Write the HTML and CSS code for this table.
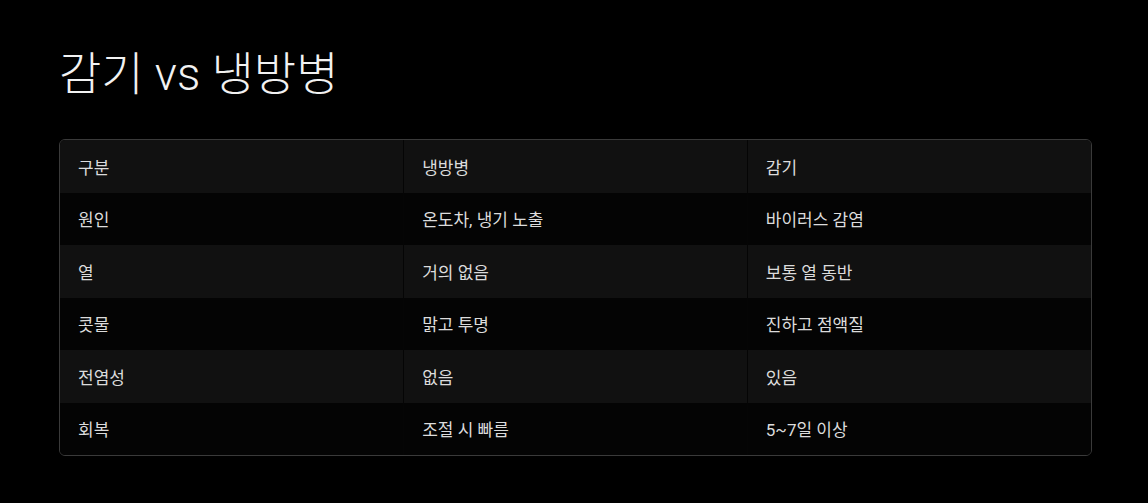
FILE: index.html
```html
<!DOCTYPE html>
<html lang="ko">
<head>
<meta charset="utf-8">
<link rel="stylesheet" href="styles.css">
</head>
<body>
<main class="page">
  <h1 class="title">감기 vs 냉방병</h1>
  <div class="table-wrap">
    <table class="cmp">
      <thead>
        <tr><th>구분</th><th>냉방병</th><th>감기</th></tr>
      </thead>
      <tbody>
        <tr><td>원인</td><td>온도차, 냉기 노출</td><td>바이러스 감염</td></tr>
        <tr><td>열</td><td>거의 없음</td><td>보통 열 동반</td></tr>
        <tr><td>콧물</td><td>맑고 투명</td><td>진하고 점액질</td></tr>
        <tr><td>전염성</td><td>없음</td><td>있음</td></tr>
        <tr><td>회복</td><td>조절 시 빠름</td><td>5~7일 이상</td></tr>
      </tbody>
    </table>
  </div>
</main>
</body>
</html>
```

FILE: styles.css
```css
html, body {
  margin: 0;
  padding: 0;
  background: #000;
}
body {
  font-family: Roboto, "Noto Sans CJK KR", sans-serif;
  color: #e6e6e6;
}
.page {
  padding: 41px 56px 0 59px;
}
.title {
  margin: 0 0 32px 0;
  font-size: 46px;
  font-weight: 300;
  line-height: 66px;
  color: #f2f2f2;
}
.table-wrap {
  border: 1px solid #3a3a3a;
  border-radius: 6px;
  overflow: hidden;
}
.cmp {
  width: 100%;
  border-collapse: collapse;
  table-layout: fixed;
}
.cmp th, .cmp td {
  text-align: left;
  font-weight: 400;
  font-size: 17px;
  height: 52.5px;
  padding: 0 18px;
  color: #dcdcdc;
  border-left: 1px solid #050505;
}
.cmp th:first-child, .cmp td:first-child {
  border-left: none;
}
.cmp thead tr {
  background: #111111;
}
.cmp tbody tr:nth-child(odd) {
  background: #040404;
}
.cmp tbody tr:nth-child(even) {
  background: #111111;
}
```
